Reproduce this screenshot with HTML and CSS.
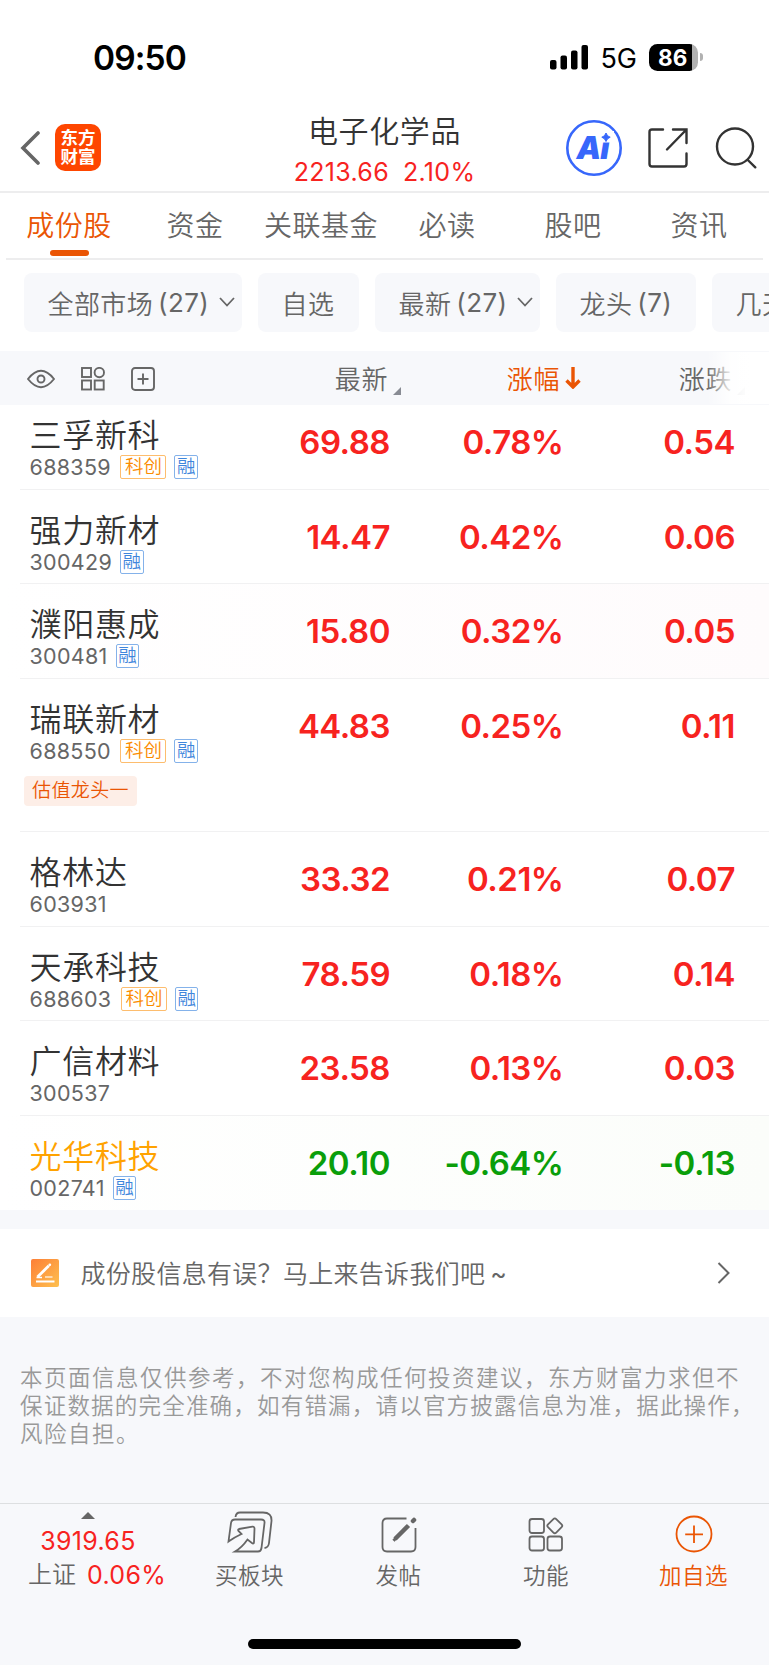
FILE: index.html
```html
<!DOCTYPE html>
<html lang="zh-CN">
<head>
  <meta charset="utf-8">
  <title>电子化学品</title>
  <link rel="stylesheet" href="styles.css">
</head>
<body>

<!-- status bar -->
<div class="status">
  <div class="time">09:50</div>
  <div class="status-right">
    <svg class="signal" width="38" height="25" viewBox="0 0 38 25">
      <rect x="0" y="15" width="6.5" height="9.5" rx="2"/>
      <rect x="10.5" y="10.5" width="6.5" height="14" rx="2"/>
      <rect x="21" y="5.5" width="6.5" height="19" rx="2"/>
      <rect x="31.5" y="0" width="6.5" height="24.5" rx="2"/>
    </svg>
    <span class="net">5G</span>
    <div class="battery"><span>86</span></div>
    <i class="nub"></i>
  </div>
</div>

<!-- header -->
<div class="header">
  <div class="header-left">
    <svg width="20" height="34" viewBox="0 0 20 34"><path d="M18 2L3 17L18 32" fill="none" stroke="#666" stroke-width="3.6" stroke-linecap="round"/></svg>
    <div class="logo">东方<br>财富</div>
  </div>
  <div class="title">
    <h1>电子化学品</h1>
    <p><span>2213.66</span><span>2.10%</span></p>
  </div>
  <div class="header-right">
    <svg width="56" height="56" viewBox="0 0 56 56">
      <circle cx="28" cy="28" r="26.7" fill="#fff" stroke="#3767fb" stroke-width="2.6"/>
      <text class="ai" x="10.5" y="38.5" textLength="33">Ai</text>
      <rect x="33" y="11" width="15" height="11.5" fill="#fff"/>
      <path d="M40 13Q41 16.400 44.200 17.200Q41 18.200 40 21.500Q39 18.200 35.800 17.200Q39 16.400 40 13Z" fill="#3767fb" stroke="#3767fb"/>
    </svg>
    <svg class="share" width="40" height="40" viewBox="0 0 40 40" fill="none" stroke="#333" stroke-width="2.4" stroke-linecap="round">
      <path d="M15 1.500H4Q1.500 1.500 1.500 4V36Q1.500 38.500 4 38.500H36Q38.500 38.500 38.500 36V25.500M25 1.500H38.500V15M38 2L19 21.500"/>
    </svg>
    <svg width="42" height="42" viewBox="0 0 42 42" fill="none" stroke="#333" stroke-width="2.4" stroke-linecap="round">
      <circle cx="20" cy="19.500" r="18"/><path d="M32.800 33L40.300 40.300"/>
    </svg>
  </div>
</div>

<div class="tabs">
  <div class="tab active">成份股</div>
  <div class="tab">资金</div>
  <div class="tab">关联基金</div>
  <div class="tab">必读</div>
  <div class="tab">股吧</div>
  <div class="tab">资讯</div>
</div>

<div class="chips">
  <div class="chip drop all">全部市场<b>(27)</b><svg width="16" height="10" viewBox="0 0 16 10"><path d="M1 1L8 8.500L15 1"/></svg></div>
  <div class="chip self">自选</div>
  <div class="chip drop newest">最新<b>(27)</b><svg width="16" height="10" viewBox="0 0 16 10"><path d="M1 1L8 8.500L15 1"/></svg></div>
  <div class="chip lead">龙头<b>(7)</b></div>
  <div class="chip more">几天</div>
</div>

<!-- table head -->
<div class="thead">
  <div class="tools">
    <svg width="28" height="20" viewBox="0 0 28 20"><path d="M1 10Q7.500 1.800 14 1.800T27 10Q20.500 18.200 14 18.200T1 10Z"/><circle cx="14" cy="10" r="3.500"/></svg>
    <svg width="24" height="24" viewBox="0 0 24 24"><rect x="1" y="1" width="9" height="9"/><circle cx="18.300" cy="5.600" r="4.700"/><rect x="1" y="13.500" width="9" height="9"/><rect x="13.700" y="13.500" width="9" height="9"/></svg>
    <svg width="24" height="24" viewBox="0 0 24 24"><rect x="1" y="1" width="22" height="22" rx="3"/><path d="M12 6.500V17.500M6.500 12H17.500"/></svg>
  </div>
  <div class="th">最新<i class="corner"></i></div>
  <div class="th sorted">涨幅<svg width="16" height="22" viewBox="0 0 16 22"><path d="M8 0V20M1.500 13.500L8 20L14.500 13.500"/></svg></div>
  <div class="th last">涨跌<i class="corner"></i></div>
  <div class="fade"></div>
</div>

<div class="list">
  <div class="row first">
    <div class="stock"><h2>三孚新科</h2><p>688359<em class="kc">科创</em><em>融</em></p></div>
    <div class="num">69.88</div><div class="num">0.78%</div><div class="num">0.54</div>
  </div>
  <div class="row">
    <div class="stock"><h2>强力新材</h2><p>300429<em>融</em></p></div>
    <div class="num">14.47</div><div class="num">0.42%</div><div class="num">0.06</div>
  </div>
  <div class="row rise">
    <div class="stock"><h2>濮阳惠成</h2><p>300481<em>融</em></p></div>
    <div class="num">15.80</div><div class="num">0.32%</div><div class="num">0.05</div>
  </div>
  <div class="row tall">
    <div class="stock"><h2>瑞联新材</h2><p>688550<em class="kc">科创</em><em>融</em></p><span class="tag">估值龙头一</span></div>
    <div class="num">44.83</div><div class="num">0.25%</div><div class="num">0.11</div>
  </div>
  <div class="row">
    <div class="stock"><h2>格林达</h2><p>603931</p></div>
    <div class="num">33.32</div><div class="num">0.21%</div><div class="num">0.07</div>
  </div>
  <div class="row">
    <div class="stock"><h2>天承科技</h2><p>688603<em class="kc">科创</em><em>融</em></p></div>
    <div class="num">78.59</div><div class="num">0.18%</div><div class="num">0.14</div>
  </div>
  <div class="row">
    <div class="stock"><h2>广信材料</h2><p>300537</p></div>
    <div class="num">23.58</div><div class="num">0.13%</div><div class="num">0.03</div>
  </div>
  <div class="row down">
    <div class="stock"><h2>光华科技</h2><p>002741<em>融</em></p></div>
    <div class="num">20.10</div><div class="num">-0.64%</div><div class="num">-0.13</div>
  </div>
</div>

<div class="feedback">
  <svg width="28" height="28" viewBox="0 0 28 28">
    <defs><linearGradient id="g" x1="0" y1="0" x2="1" y2="1"><stop offset="0" stop-color="#fd7f37"/><stop offset="1" stop-color="#fec04e"/></linearGradient></defs>
    <rect width="28" height="28" rx="2" fill="url(#g)"/>
    <path d="M5 22.500H23.500" stroke="#fff" stroke-width="2"/>
    <path d="M14 18H21.500" stroke="#fff" stroke-opacity=".7" stroke-width="1.600"/>
    <path d="M6.500 18L17.800 6.800" stroke="#fff" stroke-width="2.800"/><path d="M5.500 18.500H11" stroke="#fff" stroke-width="1.500"/><circle cx="18.800" cy="5.800" r="1.400" fill="#fff"/>
  </svg>
  <span>成份股信息有误？马上来告诉我们吧<b>~</b></span>
  <svg width="13" height="22" viewBox="0 0 13 22"><path d="M1.500 1L11.500 11L1.500 21" fill="none" stroke="#666" stroke-width="2"/></svg>
</div>

<div class="notice">
  <div>本页面信息仅供参考，不对您构成任何投资建议，东方财富力求但不</div>
  <div class="tight">保证数据的完全准确，如有错漏，请以官方披露信息为准，据此操作，</div>
  <div>风险自担。</div>
</div>

<!-- bottom bar -->
<div class="bottom">
  <div class="index">
    <div class="quote">
      <i class="up"></i>
      <span class="red">3919.65</span>
    </div>
    <div class="change"><span>上证</span><span class="red">0.06%</span></div>
  </div>
  <div class="item">
    <svg width="46" height="42" viewBox="0 0 46 42">
      <path d="M8.500 6Q9 1.500 13 1.500H36Q45 1.500 44.500 10L42 32Q41.500 36.500 37.500 37"/>
      <path d="M1.500 30.500L4 12Q4.500 8.500 8 8.500H34Q38 8.500 37.500 12L34.500 37Q34 40.500 31 40.500H8Q15 36.500 20.500 28.500L25.500 32.500Q27 33 27 31L27.500 17.500Q27.500 15.500 25.500 15.700L12 18Q10.500 18.500 11.500 20L14.500 23Q8 26 1.500 30.500Z"/>
    </svg>
    <span>买板块</span>
  </div>
  <div class="item">
    <svg width="36" height="36" viewBox="0 0 36 36"><path d="M25.500 1.500H6Q1.500 1.500 1.500 6V30Q1.500 34.500 6 34.500H30Q34.500 34.500 34.500 30V11"/><path d="M14 22L27.500 8.500" stroke-width="4.500"/><path d="M12.500 23.700L15 21" stroke-width="3"/><path d="M32 4L33 3" stroke-width="4.500" stroke-linecap="round"/></svg>
    <span>发帖</span>
  </div>
  <div class="item">
    <svg width="36" height="36" viewBox="0 0 36 36"><rect x="1.500" y="2" width="14.500" height="14" rx="2.500"/><rect x="1.500" y="19.500" width="14.500" height="14" rx="2.500"/><rect x="19.500" y="19.500" width="14.500" height="14" rx="2.500"/><rect x="21" y="3" width="11.600" height="11.600" rx="2" transform="rotate(45 26.800 8.800)"/></svg>
    <span>功能</span>
  </div>
  <div class="item add">
    <svg width="38" height="38" viewBox="0 0 38 38"><circle cx="19" cy="19" r="17.500"/><path d="M19 10.500V28M10.200 19.300H28"/></svg>
    <span>加自选</span>
  </div>
</div>
<div class="home"><i></i></div>

</body>
</html>
```
FILE: styles.css
```css
* {
  margin: 0;
  padding: 0;
  box-sizing: border-box;
}
body {
  width: 769px;
  height: 1665px;
  overflow: hidden;
  background: #f7f8fb;
  color: #666;
  font-family: Inter, "Noto Sans CJK SC", sans-serif;
  font-weight: 350;
}
svg {
  display: block;
  flex: none;
}
em, i, b {
  font-style: normal;
  font-weight: 400;
}

/* status bar */
.status {
  height: 110px;
  padding: 2px 66px 0 93px;
  display: flex;
  align-items: center;
  justify-content: space-between;
  background: #fff;
  color: #000;
}
.time {
  font-size: 33.5px;
  font-weight: 600;
  letter-spacing: -0.9px;
  padding-top: 4px;
}
.status-right {
  display: flex;
  align-items: center;
  padding-top: 2px;
}
.net {
  font-size: 27px;
  font-weight: 400;
  margin: 2px 12px 0 12px;
}
.battery {
  width: 49px;
  height: 27px;
  border-radius: 8.5px;
  background: linear-gradient(to right, #000 42.5px, #b1b1b1 42.5px);
  color: #fff;
  font-size: 22.5px;
  font-weight: 700;
  line-height: 27px;
  padding-left: 9px;
}
.nub {
  width: 3px;
  height: 8px;
  margin-left: 2px;
  border-radius: 0 4px 4px 0;
  background: #b1b1b1;
}

/* header */
.header {
  height: 83px;
  padding: 0 12px 0 20px;
  display: grid;
  grid-template-columns: 1fr 200px 1fr;
  background: #fff;
  border-bottom: 2px solid #ededee;
}
.header-left {
  display: flex;
  align-items: center;
  gap: 15px;
  height: 75px;
}
.logo {
  width: 46px;
  height: 47px;
  padding-top: 4px;
  border-radius: 10px;
  background: #fe4600;
  color: #fff;
  font-size: 17.5px;
  font-weight: 700;
  line-height: 19px;
  text-align: center;
}
.title {
  text-align: center;
  margin-left: -8px;
}
.title h1 {
  font-size: 30px;
  font-weight: 350;
  letter-spacing: 0.6px;
  line-height: 40px;
  color: #333;
  margin-top: 1px;
  white-space: nowrap;
}
.title p {
  display: flex;
  justify-content: center;
  gap: 14px;
  font-size: 25px;
  font-weight: 400;
  letter-spacing: 0.3px;
  line-height: 40px;
  margin-top: 1px;
  color: #f7231f;
}
.header-right {
  display: flex;
  align-items: center;
  justify-content: flex-end;
  height: 76px;
}
.ai {
  font-family: Inter, sans-serif;
  font-size: 31px;
  font-weight: 900;
  font-style: italic;
  fill: #3767fb;
}
.share {
  margin: 0 27px 0 26px;
}

/* tabs */
.tabs {
  height: 67px;
  padding: 0 7px 0 6px;
  display: grid;
  grid-template-columns: repeat(6, 126px);
  background: linear-gradient(#ededee, #ededee) 6px 65px / 757px 2px no-repeat #fff;
}
.tab {
  display: flex;
  flex-direction: column;
  align-items: center;
  font-size: 28px;
  letter-spacing: 0.5px;
  line-height: 40px;
  padding-top: 13px;
}
.tab.active {
  color: #ea5504;
}
.tab.active::after {
  content: "";
  width: 39px;
  height: 6px;
  margin-top: 4px;
  border-radius: 3px;
  background: #ea5504;
}

/* filter chips */
.chips {
  height: 91px;
  padding: 13px 0 0 24px;
  display: flex;
  gap: 16px;
  overflow: hidden;
  background: #fff;
}
.chip {
  flex: none;
  height: 59px;
  padding: 0 0 1px 23.5px;
  display: flex;
  align-items: center;
  border-radius: 8px;
  background: #f7f8fb;
  font-size: 26px;
  letter-spacing: 0.4px;
}
.chip b {
  margin-left: 5px;
}
.chip svg {
  margin-left: 10px;
  fill: none;
  stroke: #666;
  stroke-width: 1.8;
}
.all { width: 218px; }
.self { width: 101px; }
.newest { width: 165px; }
.lead { width: 140px; }
.more { width: 150px; }

/* table head */
.thead {
  position: relative;
  height: 54px;
  display: grid;
  grid-template-columns: 234px 156px 172px 173px;
  align-items: center;
  font-size: 26px;
  background: #f7f8fb;
}
.tools {
  display: flex;
  align-items: center;
  gap: 26px;
  padding: 1px 0 0 27px;
  fill: none;
  stroke: #666;
  stroke-width: 1.9;
}
.th {
  position: relative;
  justify-self: end;
  display: flex;
  align-items: center;
  margin-right: 2px;
  padding-bottom: 1px;
  letter-spacing: 0.6px;
}
.th.last {
  margin-right: 3px;
}
.th.sorted {
  color: #ea5504;
  margin-right: -19px;
}
.sorted svg {
  margin-left: 5px;
  fill: none;
  stroke: #ea5504;
  stroke-width: 3.4;
}
.corner {
  position: absolute;
  right: -13px;
  bottom: 2px;
  border: 4px solid #888b93;
  border-top-color: transparent;
  border-left-color: transparent;
}
.fade {
  position: absolute;
  right: 0;
  top: 1px;
  width: 62px;
  height: 52px;
  background: linear-gradient(to right, rgba(255, 255, 255, 0), rgba(255, 255, 255, 0.9) 40%, #fff 70%);
}

/* stock list */
.list {
  height: 805px;
  overflow: hidden;
  background: #fff;
}
.row {
  height: 94.5px;
  display: grid;
  grid-template-columns: 234px 156px 172px 173px;
  background: linear-gradient(#f1f1f2, #f1f1f2) 20px 100% / 749px 1px no-repeat;
}
.row.first {
  margin-top: -10px;
}
.row.tall {
  height: 153.5px;
}
.row.rise {
  background: linear-gradient(#f1f1f2, #f1f1f2) 20px 100% / 749px 1px no-repeat, linear-gradient(to right, #fff, #fefbfc);
}
.row.down {
  background: linear-gradient(to right, #fff, #fbfdfa);
}
.stock {
  padding: 20px 0 0 29.5px;
}
.stock h2 {
  font-size: 32px;
  font-weight: 350;
  letter-spacing: 0.7px;
  line-height: 42px;
  color: #333;
}
.stock p {
  display: flex;
  align-items: center;
  font-size: 21.5px;
  font-weight: 400;
  letter-spacing: 0.3px;
  line-height: 24px;
  margin-top: -2px;
}
.stock em {
  height: 24px;
  margin-left: 8px;
  padding: 0 1.5px;
  border: 1.5px solid #84b2ea;
  border-radius: 2px;
  color: #3f86dc;
  font-size: 18.5px;
  font-weight: 350;
  letter-spacing: 0;
  line-height: 21px;
}
.stock .kc {
  margin-left: 9.5px;
  padding: 0 3.5px;
  border-color: #fdbd6e;
  color: #fb8c00;
}
.tag {
  display: block;
  width: 113px;
  height: 30px;
  margin: 13px 0 0 -5.5px;
  border-radius: 4px;
  background: #fdeee7;
  color: #ea5504;
  font-size: 19px;
  letter-spacing: 0.4px;
  line-height: 30px;
  text-align: center;
  white-space: nowrap;
}
.num {
  padding-top: 26px;
  text-align: right;
  font-size: 33px;
  font-weight: 600;
  letter-spacing: -0.5px;
  line-height: 42px;
  color: #f7231f;
}
.num:nth-child(3) {
  margin-right: -1.5px;
}
.down .num {
  color: #0a9e0a;
}
.down h2 {
  color: #ffa200;
}

/* feedback */
.feedback {
  height: 88px;
  margin-top: 19px;
  padding: 0 39px 0 31px;
  display: flex;
  align-items: center;
  background: #fff;
  font-size: 25px;
}
.feedback span {
  flex: 1;
  margin: -2px 0 0 21.5px;
  letter-spacing: 0.3px;
}
.feedback b {
  margin-left: 5px;
}

.notice {
  height: 186px;
  padding: 47px 0 0 20px;
  color: #999;
  font-size: 22.5px;
  letter-spacing: 1.5px;
  line-height: 27.8px;
  white-space: nowrap;
}
.notice .tight {
  letter-spacing: 1.2px;
}

/* bottom bar */
.bottom {
  height: 110px;
  border-top: 1px solid #dddfe1;
  display: grid;
  grid-template-columns: 176px 147px 151px 144px 151px;
  font-size: 22.5px;
}
.index {
  padding: 8px 0 0 28px;
  line-height: 34px;
}
.quote {
  width: 120px;
  display: flex;
  flex-direction: column;
  align-items: center;
}
.change {
  display: flex;
  gap: 11px;
  white-space: nowrap;
  font-size: 24px;
}
.red {
  color: #f7231f;
  font-size: 25px;
  font-weight: 400;
  letter-spacing: 0.3px;
}
.up {
  border: 7px solid transparent;
  border-top: 0;
  border-bottom-color: #666;
  margin-bottom: 5px;
}
.item {
  display: flex;
  flex-direction: column;
  align-items: center;
  justify-content: flex-end;
  padding-bottom: 21px;
  letter-spacing: 0.5px;
  line-height: 32px;
}
.item svg {
  fill: none;
  stroke: #666;
  stroke-width: 1.8;
  margin-bottom: 7px;
}
.add {
  color: #ea5504;
}
.add svg {
  stroke: #ea5504;
}

.home {
  padding-top: 26px;
}
.home i {
  display: block;
  width: 273px;
  height: 10px;
  margin: 0 auto;
  border-radius: 5px;
  background: #000;
}
```
